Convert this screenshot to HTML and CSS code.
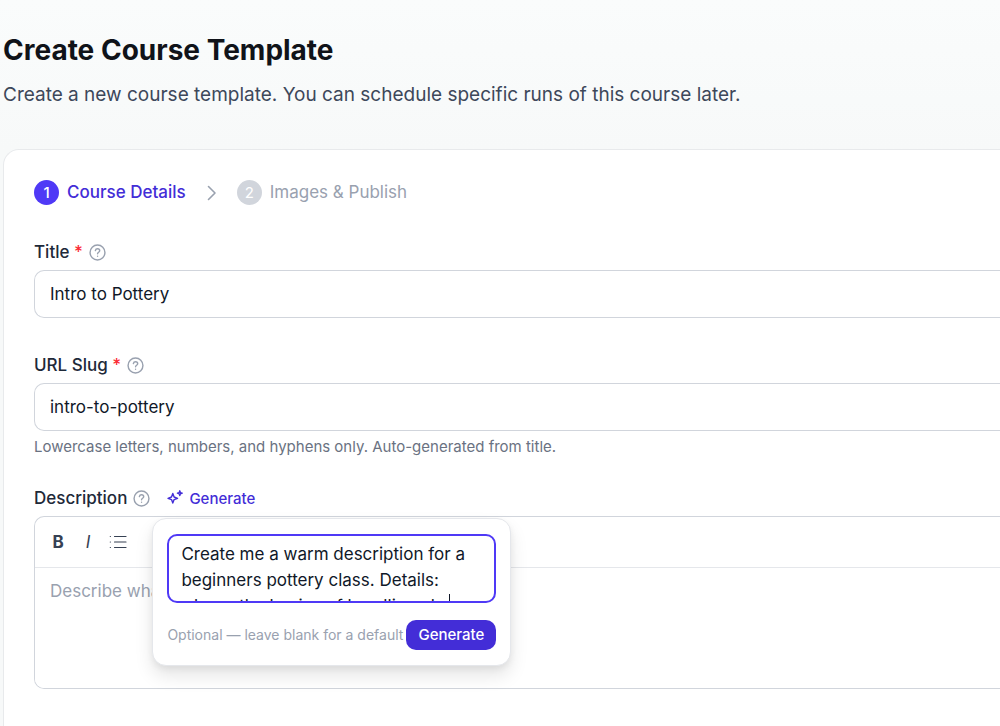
FILE: index.html
```html
<!DOCTYPE html>
<html lang="en">
  <head>
    <meta charset="UTF-8" />
    <meta name="viewport" content="width=device-width, initial-scale=1.0" />
    <title>Create Course Template</title>
    <link rel="stylesheet" href="styles.css">
  </head>
  <body>
    <header class="page-header">
      <h1>Create Course Template</h1>
      <p>Create a new course template. You can schedule specific runs of this course later.</p>
    </header>

    <main class="card">
      <ol class="steps">
        <li class="step active"><span class="step-number">1</span>Course Details</li>
        <li class="step-arrow">
          <svg width="10" height="16" viewBox="0 0 10 16" fill="none" stroke="currentColor" stroke-width="1.6" stroke-linecap="round" stroke-linejoin="round"><path d="M1.5 1.5 8 8l-6.500 6.500" /></svg>
        </li>
        <li class="step"><span class="step-number">2</span>Images &amp; Publish</li>
      </ol>

      <form class="course-form">
        <div class="field">
          <div class="label-row">
            <label for="title">Title <span class="required">*</span></label>
            <svg class="help" viewBox="0 0 24 24"><circle cx="12" cy="12" r="10.500" /><path d="M9 9.300c.3-1.700 1.500-2.500 3.100-2.500 1.700 0 3 1 3 2.600 0 2.200-3 2.300-3 4.300" /><path d="M12.100 17.200v.1" /></svg>
          </div>
          <input type="text" id="title" value="Intro to Pottery" />
        </div>

        <div class="field has-hint">
          <div class="label-row">
            <label for="slug">URL Slug <span class="required">*</span></label>
            <svg class="help" viewBox="0 0 24 24"><circle cx="12" cy="12" r="10.500" /><path d="M9 9.300c.3-1.700 1.500-2.500 3.100-2.500 1.700 0 3 1 3 2.600 0 2.200-3 2.300-3 4.300" /><path d="M12.100 17.200v.1" /></svg>
          </div>
          <input type="text" id="slug" value="intro-to-pottery" />
          <p class="hint">Lowercase letters, numbers, and hyphens only. Auto-generated from title.</p>
        </div>

        <div class="field">
          <div class="label-row">
            <label for="description">Description</label>
            <svg class="help" viewBox="0 0 24 24"><circle cx="12" cy="12" r="10.500" /><path d="M9 9.300c.3-1.700 1.500-2.500 3.100-2.500 1.700 0 3 1 3 2.600 0 2.200-3 2.300-3 4.300" /><path d="M12.100 17.200v.1" /></svg>
            <div class="generate">
              <button type="button" class="generate-link">
                <svg width="16" height="16" viewBox="0 0 16 16" fill="none" stroke="currentColor" stroke-width="1.400" stroke-linecap="round" stroke-linejoin="round">
                  <path d="M5.800 3.500 7.100 7 10.600 8.300 7.100 9.600 5.800 13.100 4.500 9.600 1 8.300 4.500 7Z" />
                  <path d="M12.800 .8 13.400 2.600 15.200 3.200 13.400 3.800 12.800 5.600 12.200 3.800 10.400 3.200 12.200 2.600Z" />
                </svg>
                Generate
              </button>
              <div class="popover">
                <div class="prompt">
                  <textarea class="prompt-text" aria-label="Prompt">Create me a warm description for a beginners pottery class. Details:
- learn the basics of handling clay</textarea>
                  <span class="caret"></span>
                </div>
                <div class="popover-footer">
                  <span>Optional — leave blank for a default</span>
                  <button type="button" class="generate-btn">Generate</button>
                </div>
              </div>
            </div>
          </div>
          <div class="editor">
            <div class="toolbar">
              <button type="button" class="bold">B</button>
              <button type="button" class="italic">I</button>
              <button type="button" aria-label="Bullet list">
                <svg width="18" height="16" viewBox="0 0 18 16" fill="none" stroke="currentColor" stroke-width="1.200" stroke-linecap="round"><path d="M5.500 2.500h11.500M5.500 8h11.500M5.500 13.500h11.500M1.300 2.500h.1M1.300 8h.1M1.300 13.500h.1" /></svg>
              </button>
            </div>
            <textarea id="description" placeholder="Describe what students will learn"></textarea>
          </div>
        </div>
      </form>
    </main>
  </body>
</html>
```
FILE: styles.css
```css
* {
  box-sizing: border-box;
}

body {
  font-family: Inter, sans-serif;
  margin: 0;
  padding: 32px 0 0 3px;
  min-height: 100vh;
  background: linear-gradient(to bottom, #fafcfc, #f7f9f9 150px);
  color: #1e2939;
  display: flex;
  flex-direction: column;
}

button,
input,
textarea {
  font-family: inherit;
  color: inherit;
}

button {
  border: none;
  background: none;
  padding: 0;
  cursor: pointer;
}

.page-header h1 {
  font-size: 28px;
  line-height: 36px;
  font-weight: 700;
  color: #101319;
  margin: 0 0 13px;
}

.page-header p {
  font-size: 19px;
  line-height: 28px;
  color: #3d485a;
  margin: 0;
}

.card {
  flex: 1;
  margin-top: 40px;
  padding: 30px 0 36px 30px;
  background: #fff;
  border: 1px solid #e8eaec;
  border-right: none;
  border-bottom: none;
  border-radius: 16px 0 0 0;
}

.steps {
  list-style: none;
  display: flex;
  align-items: center;
  margin: 0 0 35px;
  padding: 0;
  line-height: 25px;
}

.step {
  display: flex;
  align-items: center;
  gap: 8px;
  font-size: 17px;
  color: #99a1af;
}

.step-number {
  width: 25px;
  height: 25px;
  border-radius: 50%;
  background: #d1d5dc;
  color: #fff;
  font-size: 15px;
  text-align: center;
}

.step.active {
  color: #432dd7;
  font-weight: 500;
}

.step.active .step-number {
  background: #4f39f6;
}

.step-arrow {
  display: flex;
  margin: 0 20px 0 21px;
  color: #99a1af;
}

.field {
  margin-bottom: 35px;
}

.field.has-hint {
  margin-bottom: 27px;
}

.field:last-child {
  margin-bottom: 0;
}

.label-row {
  display: flex;
  align-items: center;
  gap: 6px;
  height: 24px;
  margin-bottom: 6px;
}

.label-row label {
  font-size: 17px;
  font-weight: 500;
}

.required {
  color: #fb2c36;
}

.help {
  width: 17px;
  height: 17px;
  fill: none;
  stroke: #99a1af;
  stroke-width: 2;
  stroke-linecap: round;
}

.field input {
  display: block;
  width: 100%;
  height: 48px;
  padding: 0 15px;
  border: 1px solid #d1d5dc;
  border-right: none;
  border-radius: 10px 0 0 10px;
  background: #fff;
  color: #101828;
  font-size: 17px;
}

.hint {
  margin: 4px 0 0;
  font-size: 15px;
  line-height: 24px;
  color: #6a7282;
}

.generate {
  position: relative;
  margin-left: 11px;
}

.generate-link {
  display: flex;
  align-items: center;
  gap: 6px;
  color: #432dd7;
  font-size: 15px;
  font-weight: 500;
}

/* opens under the Generate link, over the editor */
.popover {
  position: absolute;
  top: 29px;
  left: -15px;
  z-index: 1;
  width: 359px;
  padding: 15px 14px;
  background: #fff;
  border: 1px solid #e5e7eb;
  border-radius: 14px;
  box-shadow: 0 10px 18px rgba(0, 0, 0, 0.1), 0 3px 6px rgba(0, 0, 0, 0.06);
}

.prompt {
  position: relative;
}

.prompt-text {
  display: block;
  width: 100%;
  height: 69px;
  padding: 5px 12px;
  border: 2px solid #4f39f6;
  border-radius: 10px;
  outline: none;
  overflow: hidden;
  resize: none;
  background: #fff;
  color: #101828;
  font-size: 17px;
  line-height: 26px;
}

.caret {
  position: absolute;
  bottom: 2px;
  right: 46px;
  width: 1px;
  height: 7px;
  background: #101828;
}

.popover-footer {
  display: flex;
  align-items: center;
  justify-content: space-between;
  margin-top: 17px;
  font-size: 14px;
  color: #99a1af;
  white-space: nowrap;
}

.generate-btn {
  height: 30px;
  padding: 0 12px;
  border-radius: 10px;
  background: #432dd7;
  color: #fff;
  font-size: 15px;
  font-weight: 500;
}

.editor {
  border: 1px solid #d1d5dc;
  border-right: none;
  border-radius: 10px 0 0 10px;
  overflow: hidden;
}

.toolbar {
  display: flex;
  align-items: center;
  gap: 2px;
  height: 51px;
  padding: 0 9px;
  border-bottom: 1px solid #e5e7eb;
  color: #364153;
}

.toolbar button {
  display: flex;
  align-items: center;
  justify-content: center;
  width: 28px;
  height: 32px;
  font-size: 17px;
}

.toolbar .bold {
  font-weight: 700;
}

.toolbar .italic {
  font-style: italic;
}

#description {
  display: block;
  width: 100%;
  height: 120px;
  padding: 11px 15px;
  border: none;
  outline: none;
  resize: none;
  background: #fff;
  font-size: 17px;
  line-height: 25px;
}

#description::placeholder {
  color: #99a1af;
}
```
